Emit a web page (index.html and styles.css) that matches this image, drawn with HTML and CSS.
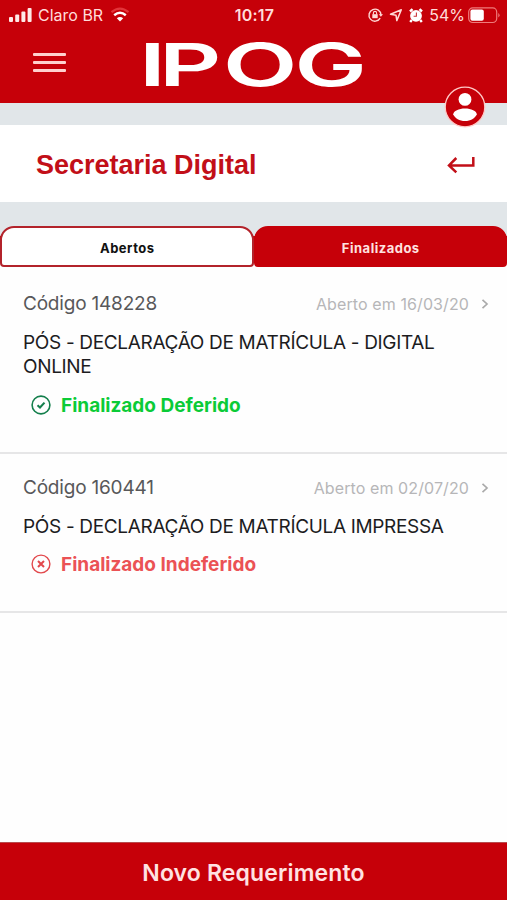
FILE: index.html
```
<!DOCTYPE html>
<html lang="pt-BR">
<head>
  <meta charset="utf-8">
  <meta name="viewport" content="width=device-width, initial-scale=1">
  <title>Secretaria Digital</title>
  <link rel="stylesheet" href="styles.css">
</head>
<body>

  <!-- Header -->
  <header class="header">
    <div class="status-bar">
      <div class="carrier">
        <svg width="24" height="16" viewBox="0 0 24 16" fill="#ffe9e7">
          <rect x="0" y="10" width="4" height="5" rx="1"/>
          <rect x="6.2" y="7.5" width="4" height="7.5" rx="1"/>
          <rect x="12.4" y="4.5" width="4" height="10.5" rx="1"/>
          <rect x="18.6" y="1" width="4" height="14" rx="1"/>
        </svg>
        <span class="carrier-name">Claro BR</span>
        <svg class="wifi" width="20" height="16" viewBox="0 0 20 16" fill="none">
          <path d="M1.5 5.2Q10 -2 18.5 5.2" stroke="#e2353a" stroke-width="2.2"/>
          <path d="M4.2 8.2Q10 3.4 15.8 8.2" stroke="#fff" stroke-width="2.5"/>
          <path d="M10 14.5L6.8 11.2Q10 8.6 13.2 11.2Z" fill="#fff"/>
        </svg>
      </div>
      <span class="clock">10:17</span>
      <div class="indicators">
        <svg width="16" height="16" viewBox="0 0 16 16" fill="none" stroke="#ffd9d6" stroke-width="1.4">
          <path d="M13.2 11.2A6 6 0 1 1 14 8"/>
          <path d="M11.8 7.2H16L13.9 9.8Z" fill="#ffd9d6" stroke="none"/>
          <rect x="5.3" y="7.2" width="5.4" height="4" fill="#ffd9d6" stroke="none"/>
          <path d="M6.4 7.5V6A1.6 1.6 0 0 1 9.6 6V7.5" stroke-width="1.1"/>
        </svg>
        <svg width="14" height="14" viewBox="0 0 14 14" fill="none" stroke="#ffd9d6" stroke-width="1.5" stroke-linejoin="round">
          <path d="M1.5 6.3L12.3 1.8L7.8 12.6L7 7.2Z"/>
        </svg>
        <svg width="14" height="15" viewBox="0 0 14 15" fill="none">
          <circle cx="7" cy="7.8" r="5.9" fill="#fff"/>
          <path d="M1 3.5L3.5 1.2M13 3.5L10.5 1.2M2.8 12L1.2 14M11.2 12L12.8 14" stroke="#fff" stroke-width="2.4"/>
          <path d="M7.4 4.5V8.2H4.6" stroke="#c9333a" stroke-width="1.1"/>
        </svg>
        <span class="battery-level">54%</span>
        <svg class="battery" width="32" height="17" viewBox="0 0 32 17">
          <rect x="0.7" y="0.9" width="28" height="14.6" rx="4" fill="none" stroke="#ef7b7b" stroke-width="1.2"/>
          <rect x="2.4" y="2.6" width="13.4" height="11.2" rx="2" fill="#fff"/>
          <path d="M30.3 6V10.6Q31.6 9.8 31.6 8.3T30.3 6" fill="#ef7b7b"/>
        </svg>
      </div>
    </div>
    <div class="nav">
      <button class="menu-btn" aria-label="Menu"><i></i><i></i><i></i></button>
      <svg class="logo" width="220" height="50" viewBox="0 0 220 50">
        <text class="logo-text" transform="scale(1.64 1)" x="-4.2 8 46.9 90.5" y="45.5">IPOG</text>
      </svg>
    </div>
    <svg class="avatar" width="42" height="42" viewBox="0 0 42 42">
      <circle cx="21" cy="21" r="19.8" fill="#c60009" stroke="#ffc9c7" stroke-width="1.3"/>
      <circle cx="21" cy="13.4" r="6.4" fill="#fff"/>
      <path d="M9.2 28.5C9.2 24.8 15 22.4 21 22.4S32.8 24.8 32.8 28.5C31 32.3 26.5 35 21 35S11 32.3 9.2 28.5Z" fill="#fff"/>
    </svg>
  </header>

  <!-- Page title -->
  <div class="title-bar">
    <h1>Secretaria Digital</h1>
    <svg width="28" height="18" viewBox="0 0 28 18" fill="none" stroke="#c20f18" stroke-width="2.5">
      <path d="M26.3 1V9.4H2M9.3 2L2 9.4L9.3 16.4"/>
    </svg>
  </div>

  <!-- Tabs -->
  <div class="tabs">
    <div class="tab tab-open">Abertos</div>
    <div class="tab tab-done">Finalizados</div>
  </div>

  <!-- Requests -->
  <main class="list">
    <div class="item">
      <div class="item-top">
        <span class="code">Código 148228</span>
        <span class="date">Aberto em 16/03/20</span>
        <svg width="8" height="12" viewBox="0 0 8 12" fill="none" stroke="#aaa" stroke-width="1.7"><path d="M1.5 1.8L6 6L1.5 10.2"/></svg>
      </div>
      <p class="name">PÓS - DECLARAÇÃO DE MATRÍCULA - DIGITAL ONLINE</p>
      <div class="status approved">
        <svg width="20" height="20" viewBox="0 0 20 20" fill="none" stroke="#147f4c">
          <circle cx="10" cy="10" r="8.9" stroke-width="1.6"/>
          <path d="M6.5 10.2L9 12.5L13.5 7.6" stroke-width="2.1"/>
        </svg>
        <span>Finalizado Deferido</span>
      </div>
    </div>
    <div class="item">
      <div class="item-top">
        <span class="code">Código 160441</span>
        <span class="date">Aberto em 02/07/20</span>
        <svg width="8" height="12" viewBox="0 0 8 12" fill="none" stroke="#aaa" stroke-width="1.7"><path d="M1.5 1.8L6 6L1.5 10.2"/></svg>
      </div>
      <p class="name">PÓS - DECLARAÇÃO DE MATRÍCULA IMPRESSA</p>
      <div class="status rejected">
        <svg width="20" height="20" viewBox="0 0 20 20" fill="none" stroke="#e2484c">
          <circle cx="10" cy="10" r="8.9" stroke-width="1.4"/>
          <path d="M7 7L13 13M13 7L7 13" stroke-width="2"/>
        </svg>
        <span>Finalizado Indeferido</span>
      </div>
    </div>
  </main>

  <button class="new-btn">Novo Requerimento</button>

</body>
</html>
```
FILE: styles.css
```
* {
  box-sizing: border-box;
}
body {
  margin: 0;
  height: 900px;
  display: flex;
  flex-direction: column;
  background: #fefefe;
  font-family: Inter, "Liberation Sans", sans-serif;
  overflow: hidden;
}
svg {
  display: block;
  flex: none;
}
button {
  border: none;
  font-family: inherit;
}

/* header */
.header {
  position: relative;
  height: 103px;
  flex: none;
  background: #c60009;
  color: #ffdcda;
}
.status-bar {
  display: grid;
  grid-template-columns: 1fr auto 1fr;
  align-items: center;
  height: 30px;
  padding: 0 7px 0 9px;
  font-size: 16px;
}
.carrier, .indicators {
  display: flex;
  align-items: center;
}
.carrier-name {
  margin-left: 5px;
}
.wifi {
  margin-left: 7px;
}
.clock {
  font-weight: 600;
  letter-spacing: 0.2px;
}
.indicators {
  justify-content: flex-end;
  gap: 6px;
}
.battery {
  margin-left: -3px;
}
.nav {
  display: flex;
  align-items: flex-start;
  padding: 10px 0 0 33px;
}
.menu-btn {
  display: flex;
  flex-direction: column;
  gap: 5px;
  width: 33px;
  margin-top: 13px;
  padding: 0;
  background: none;
}
.menu-btn i {
  height: 3px;
  border-radius: 1px;
  background: #ffd0ce;
}
.logo {
  margin-left: 80px;
  overflow: visible;
}
.logo-text {
  font-size: 59px;
  font-weight: 600;
  fill: #fff;
}
.avatar {
  position: absolute;
  right: 21px;
  top: 86px;
}

/* title */
.title-bar {
  display: flex;
  align-items: center;
  justify-content: space-between;
  height: 99px;
  flex: none;
  border-top: 22px solid #e1e6e9;
  padding: 3px 32px 0 36px;
  background: #fff;
}
h1 {
  margin: 0;
  color: #c20f18;
  font: bold 27px "Liberation Sans", Arial, sans-serif;
}

/* tabs */
.tabs {
  display: flex;
  height: 65px;
  flex: none;
  padding-top: 24px;
  background: linear-gradient(#e1e6e9 34px, #c60009 34px, #c60009 58px, #fefefe 58px);
}
.tab {
  display: flex;
  align-items: center;
  justify-content: center;
  width: 50%;
  border: 2px solid #b3232b;
  border-radius: 14px 14px 4px 4px;
  padding: 2px 0 0 1px;
  font-size: 13px;
  font-weight: 700;
  letter-spacing: 0.5px;
}
.tab-open {
  background: #fff;
  color: #111;
}
.tab-done {
  border-color: #c60009;
  background: #c60009;
  color: #ffe2e0;
}

/* list */
.list {
  flex: 1;
}
.item {
  border-bottom: 2px solid #e6e6e7;
  padding: 24px 18px 35px 23px;
}
.item + .item {
  padding-top: 21px;
}
.item-top {
  display: flex;
  align-items: center;
  height: 25px;
}
.code {
  flex: 1;
  color: #58585a;
  font-size: 19px;
  letter-spacing: -0.2px;
}
.date {
  margin-right: 12px;
  color: #b6b6b8;
  font-size: 16px;
  letter-spacing: 0.1px;
}
.name {
  margin: 15px 0 14px;
  color: #1c1c1e;
  font-size: 19px;
  line-height: 24px;
  letter-spacing: -0.33px;
}
.item + .item .name {
  margin-bottom: 13px;
}
.status {
  display: flex;
  align-items: center;
  gap: 10px;
  height: 24px;
  padding-left: 8px;
  font-size: 19px;
  font-weight: 700;
}
.approved {
  color: #0bcb37;
}
.rejected {
  color: #eb5255;
}

/* footer button */
.new-btn {
  height: 58px;
  flex: none;
  border-top: 1px solid #b84a4c;
  padding: 3px 0 0;
  background: #c60009;
  color: #ffe2e2;
  font-size: 23px;
  font-weight: 600;
  letter-spacing: 0.15px;
}
```
